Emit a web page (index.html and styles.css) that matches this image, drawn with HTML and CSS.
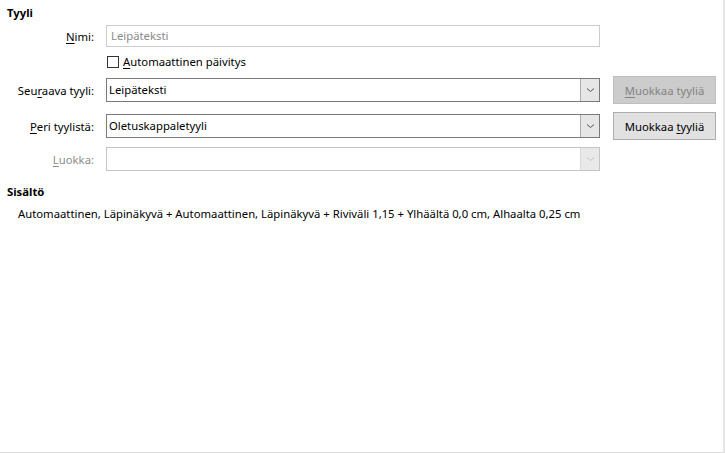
FILE: index.html
```html
<!DOCTYPE html>
<html lang="fi">
<head>
    <meta charset="UTF-8">
    <title>Tyyli</title>
    <link rel="stylesheet" href="styles.css">
</head>
<body>
    <div class="page">
        <h2 class="section-title">Tyyli</h2>

        <div class="row row-name">
            <label class="label"><u>N</u>imi:</label>
            <div class="field field-disabled">Leipäteksti</div>
        </div>

        <div class="row row-check">
            <span class="label"></span>
            <label class="check"><span class="box"></span><u>A</u>utomaattinen päivitys</label>
        </div>

        <div class="row row-select">
            <label class="label">Seu<u>r</u>aava tyyli:</label>
            <div class="select">
                <span class="value">Leipäteksti</span>
                <span class="arrow"><svg width="9" height="6" viewBox="0 0 9 6"><path d="M1 1.5 L4.5 4.5 L8 1.5" fill="none" stroke="#555" stroke-width="1"/></svg></span>
            </div>
            <button class="btn" disabled><u>M</u>uokkaa tyyliä</button>
        </div>

        <div class="row row-select">
            <label class="label"><u>P</u>eri tyylistä:</label>
            <div class="select">
                <span class="value">Oletuskappaletyyli</span>
                <span class="arrow"><svg width="9" height="6" viewBox="0 0 9 6"><path d="M1 1.5 L4.5 4.5 L8 1.5" fill="none" stroke="#555" stroke-width="1"/></svg></span>
            </div>
            <button class="btn">Muokkaa <u>t</u>yyliä</button>
        </div>

        <div class="row row-select row-last">
            <label class="label label-disabled"><u>L</u>uokka:</label>
            <div class="select select-disabled">
                <span class="value"></span>
                <span class="arrow"><svg width="9" height="6" viewBox="0 0 9 6"><path d="M1 1.5 L4.5 4.5 L8 1.5" fill="none" stroke="#c4c4c4" stroke-width="1"/></svg></span>
            </div>
        </div>

        <h2 class="section-title section-content">Sisältö</h2>
        <p class="summary">Automaattinen, Läpinäkyvä + Automaattinen, Läpinäkyvä + Riviväli 1,15 + Ylhäältä 0,0 cm, Alhaalta 0,25 cm</p>
    </div>
</body>
</html>
```

FILE: styles.css
```css
html, body {
    margin: 0;
    height: 100%;
}
body {
    font-family: "Noto Sans", sans-serif;
    font-size: 11.3px;
    color: #000;
    background-color: #fff;
}
.page {
    box-sizing: border-box;
    height: 453px;
    width: 725px;
    padding: 5px 0 0 7px;
    border-right: 2px solid #e6e6e6;
    border-bottom: 1px solid #dcdcdc;
}
u {
    text-decoration: underline;
    text-underline-offset: 2px;
}
.section-title {
    margin: 0;
    font-size: 11.3px;
    font-weight: bold;
    line-height: 16px;
}
.row {
    display: flex;
    align-items: center;
}
.label {
    width: 87px;
    flex: none;
    text-align: right;
    margin-right: 12px;
}
.label-disabled {
    color: #8c8c8c;
}
.row-name {
    margin-top: 4px;
    height: 22px;
}
.field {
    box-sizing: border-box;
    width: 494px;
    height: 22px;
    border: 1px solid #7a7a7a;
    padding: 0 4px;
    line-height: 20px;
}
.field-disabled {
    border-color: #cccccc;
    color: #8a8a8a;
}
.row-check {
    margin-top: 8px;
    height: 13px;
}
.check {
    display: flex;
    align-items: center;
}
.box {
    box-sizing: border-box;
    width: 12px;
    height: 12px;
    border: 1px solid #333;
    margin: 0 4px 0 1px;
}
.row-select {
    margin-top: 8px;
    height: 28px;
}
.row-last {
    margin-top: 5px;
}
.select {
    box-sizing: border-box;
    width: 494px;
    height: 24px;
    border: 1px solid #7a7a7a;
    display: flex;
    align-items: stretch;
}
.select .value {
    flex: 1;
    padding: 0 2px;
    line-height: 22px;
}
.select .arrow {
    width: 18px;
    background-color: #e6e6e6;
    border-left: 1px solid #adadad;
    display: flex;
    align-items: center;
    justify-content: center;
}
.select-disabled {
    border-color: #c4c4c4;
}
.select-disabled .arrow {
    background-color: #e9e9e9;
    border-left-color: #dadada;
}
.btn {
    box-sizing: border-box;
    margin-left: 13px;
    width: 103px;
    height: 28px;
    font-family: inherit;
    font-size: 11.3px;
    background-color: #e1e1e1;
    border: 1px solid #adadad;
    color: #000;
    padding: 0;
}
.btn:disabled {
    background-color: #cccccc;
    border-color: #bfbfbf;
    color: #838383;
}
.section-content {
    margin-top: 11px;
}
.summary {
    margin: 6px 0 0 11px;
    line-height: 16px;
}
```
